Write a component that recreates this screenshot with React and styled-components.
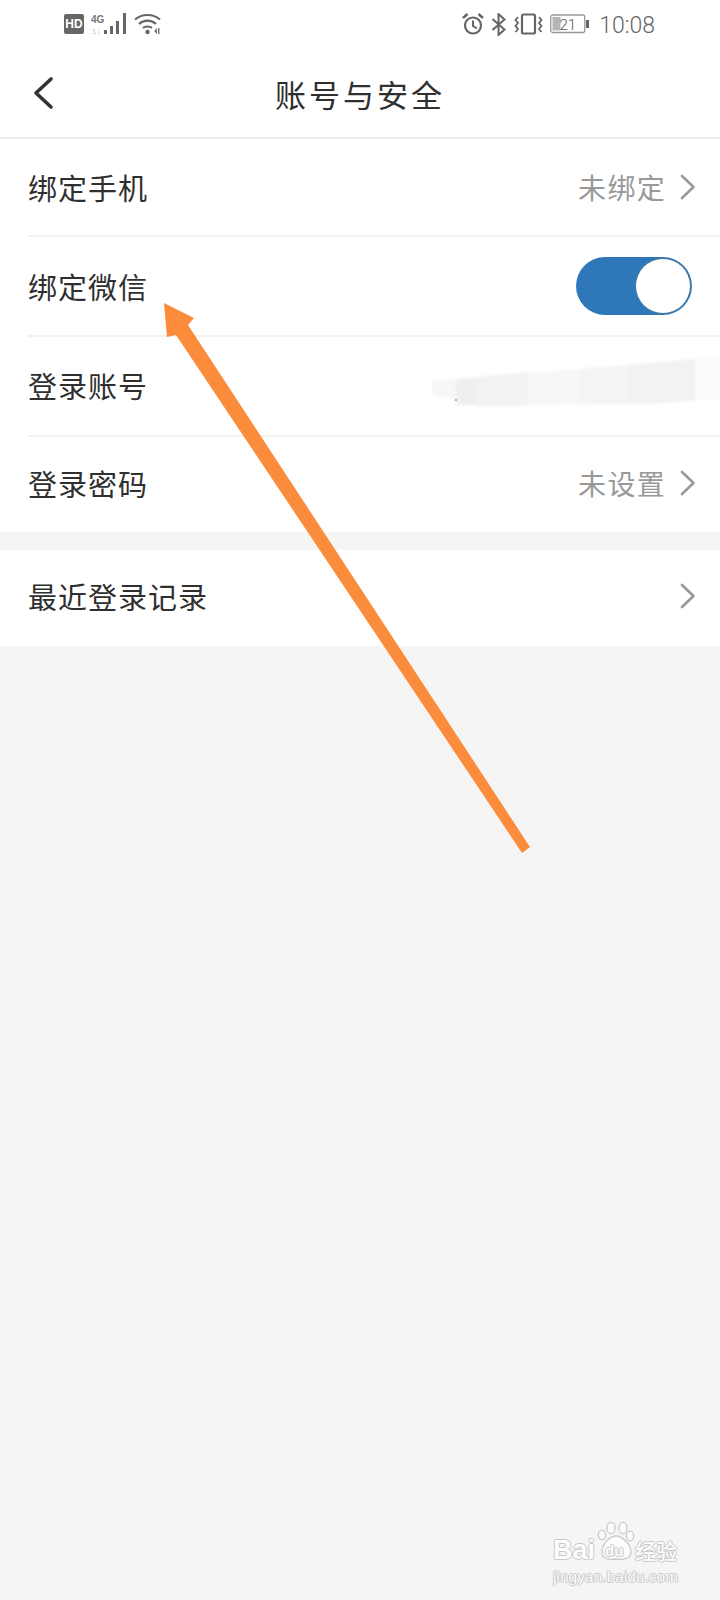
import styled, { createGlobalStyle } from "styled-components"

const Global = createGlobalStyle`
  html, body { margin: 0; padding: 0; background: #f5f5f5; }
  * { box-sizing: border-box; }
`
const cjk = `"Noto Sans CJK SC", "Liberation Sans", sans-serif`

const Screen = styled.div`
  position: relative;
  width: 720px; height: 1600px;
  overflow: hidden;
  background: #f5f5f5;
  font-family: ${cjk};
`
const Header = styled.header`
  background: #fff;
  border-bottom: 2px solid #ececec;
  height: 139px;
`
const StatusBar = styled.div`
  height: 50px;
  display: flex;
  align-items: center;
  justify-content: space-between;
  padding: 0 65px 2px 64px;
`
const StatusGroup = styled.div`
  display: flex;
  align-items: center;
  gap: ${p => p.$gap || 7}px;
`
const HdBadge = styled.span`
  width: 20px; height: 20px;
  border-radius: 2px;
  background: #666;
  color: #fff;
  font: bold 12px/20px "Liberation Sans", sans-serif;
  text-align: center;
`
const Time = styled.span`
  font: 300 23px/1 Roboto, "Liberation Sans", sans-serif;
  color: #666;
  margin: 2px 0 0 3px;
`
const Nav = styled.nav`
  position: relative;
  height: 87px;
  display: flex;
  align-items: center;
  justify-content: center;
`
const BackIcon = styled.svg`
  position: absolute;
  left: 32px; top: 26px;
`
const Title = styled.h1`
  margin: 0;
  font-size: 31px;
  font-weight: 400;
  letter-spacing: 3px;
  color: #2f2f2f;
`
const Section = styled.section`
  background: #fff;
  margin-bottom: ${p => p.$gap || 0}px;
`
const Row = styled.div`
  height: ${p => p.$height}px;
  margin-left: 28px;
  padding: 0 24px ${p => p.$lift || 0}px 0;
  display: flex;
  align-items: center;
  justify-content: space-between;
  border-bottom: ${p => (p.$last ? "none" : "2px solid #f1f1f1")};
`
const Label = styled.span`
  font-size: 29px;
  letter-spacing: 1px;
  color: #2f2f2f;
`
const Right = styled.div`
  display: flex;
  align-items: center;
  gap: 14px;
`
const Value = styled.span`
  font-size: 28px;
  letter-spacing: 1.3px;
  color: #999;
`
const Toggle = styled.div`
  position: relative;
  width: 116px; height: 58px;
  margin-right: 4px;
  border-radius: 29px;
  background: #2e77b8;
`
const Knob = styled.div`
  position: absolute;
  top: 1px; right: 1px;
  width: 56px; height: 56px;
  border-radius: 50%;
  background: #fff;
  border: 1.5px solid #3f7396;
`
const Smudge = styled.svg`
  margin-right: -24px;
`
const Overlay = styled.svg`
  position: absolute;
  left: 0; top: 0;
  pointer-events: none;
`
const Watermark = styled.div`
  position: absolute;
  left: 553px; top: 1521px;
  width: 135px;
  color: #fcfcfc;
  text-shadow: 1px 0 0 #c9c9c9, -1px 0 0 #c9c9c9, 0 1px 0 #c9c9c9, 0 -1px 0 #c9c9c9;
`
const MarkTop = styled.div`
  display: flex;
  align-items: flex-end;
  height: 41px;
`
const MarkBai = styled.span`
  font: bold 27px/24px "Liberation Sans", sans-serif;
`
const MarkDu = styled.span`
  position: relative;
  width: 37px; height: 41px;
  margin-left: 2px;
  flex: none;
`
const MarkDuText = styled.span`
  position: absolute;
  left: 8px; bottom: 1px;
  font: bold 15px/20px "Liberation Sans", sans-serif;
`
const MarkCn = styled.span`
  font: 500 21px/24px ${cjk};
  margin-left: 1px;
  white-space: nowrap;
`
const MarkUrl = styled.div`
  font: 15px/16px "Liberation Sans", sans-serif;
  letter-spacing: 0.25px;
  margin-top: 7px;
  white-space: nowrap;
`

const Chevron = () => (
  <svg width="16" height="26" viewBox="0 0 16 26">
    <path d="M2 2 L13.5 13 L2 24" fill="none" stroke="#999" strokeWidth="2.6" strokeLinecap="round" strokeLinejoin="round" />
  </svg>
)

const NetworkIcon = () => (
  <svg width="36" height="22" viewBox="0 0 36 22">
    <text x="0" y="10" fontFamily="Liberation Sans" fontSize="10" fontWeight="bold" fill="#777">4G</text>
    <text x="1" y="21" fontFamily="Liberation Sans" fontSize="8" fill="#c4c4c4">1↓</text>
    <rect x="13" y="17" width="3" height="4" fill="#666" />
    <rect x="19" y="13" width="3" height="8" fill="#666" />
    <rect x="25" y="8" width="3" height="13" fill="#666" />
    <rect x="32" y="0" width="3" height="21" fill="#666" />
  </svg>
)

const WifiIcon = () => (
  <svg width="27" height="22" viewBox="0 0 27 22">
    <g fill="none" stroke="#666" strokeWidth="2.2">
      <path d="M1 6.5 C8 0.5 19 0.5 26 6.5" />
      <path d="M5 11 C10 6.5 17 6.5 22 11" />
      <path d="M9 15 C11.5 13 15.5 13 18 15" />
    </g>
    <circle cx="13.5" cy="19" r="2.2" fill="#666" />
    <path d="M20 18 l3-3 v6 z M24 15 h1.5 v6 h-1.5 z" fill="#777" />
  </svg>
)

const AlarmIcon = () => (
  <svg width="22" height="22" viewBox="0 0 22 22">
    <circle cx="11" cy="12.5" r="8" fill="none" stroke="#666" strokeWidth="2.2" />
    <path d="M11 7.5 V13 L15 15.5" fill="none" stroke="#666" strokeWidth="2" />
    <path d="M1 5 L5.5 1 M21 5 L16.5 1" stroke="#666" strokeWidth="2.4" />
  </svg>
)

const BluetoothIcon = () => (
  <svg width="16" height="23" viewBox="0 0 16 23">
    <path d="M1.5 6 L13.5 16.5 L7.5 22 V1 L13.5 6.5 L1.5 17" fill="none" stroke="#666" strokeWidth="2" />
  </svg>
)

const VibrateIcon = () => (
  <svg width="29" height="22" viewBox="0 0 29 22">
    <rect x="8" y="1.5" width="13" height="19" rx="1.5" fill="none" stroke="#666" strokeWidth="2.2" />
    <path d="M4 4 L1.5 7 L4 10 L1.5 13 L4 16 L1.5 19 M25 4 L27.5 7 L25 10 L27.5 13 L25 16 L27.5 19" fill="none" stroke="#666" strokeWidth="1.8" />
  </svg>
)

const BatteryIcon = () => (
  <svg width="39" height="20" viewBox="0 0 39 20">
    <rect x="0.75" y="1" width="34" height="17.5" rx="2" fill="#fff" stroke="#999" strokeWidth="1.3" />
    <rect x="2.5" y="3" width="8" height="13.5" fill="#b5b5b5" />
    <text x="9.5" y="15.5" fontFamily="Roboto" fontSize="15" fontWeight="300" fill="#555">21</text>
    <rect x="36" y="6" width="3" height="8" fill="#666" />
  </svg>
)

const LoginSmudge = () => (
  <Smudge width="292" height="76" viewBox="0 0 292 76">
    <defs>
      <filter id="soft"><feGaussianBlur stdDeviation="1.5" /></filter>
    </defs>
    <g filter="url(#soft)">
      <polygon points="4,34 267,12 267,54 60,60 4,48" fill="#f7f7f7" />
      <polygon points="267,12 292,10 292,52 267,54" fill="#fbfbfb" />
      <polygon points="28,32 50,30 50,58 28,58" fill="#efefef" />
      <polygon points="50,30 100,25 100,58 50,60" fill="#f2f2f2" />
      <polygon points="150,22 240,16 240,56 150,58" fill="#f4f4f4" />
      <polygon points="200,18 267,12 267,54 200,56" fill="#f2f2f2" />
    </g>
    <circle cx="28" cy="53" r="1" fill="#999" />
  </Smudge>
)

const Arrow = () => (
  <Overlay width="720" height="1600" viewBox="0 0 720 1600">
    <polygon
      points="164,303 194,318 188,325 530,847 522,853 176,335 167,337"
      fill="#fb8c3c"
    />
  </Overlay>
)

const BaiduMark = () => (
  <Watermark>
    <MarkTop>
      <MarkBai>Bai</MarkBai>
      <MarkDu>
        <svg width="44" height="41" viewBox="0 0 44 41">
          <g fill="#fcfcfc" stroke="#c9c9c9" strokeWidth="1.3">
            <ellipse cx="5" cy="14" rx="3.6" ry="4.6" />
            <ellipse cx="14" cy="7" rx="4" ry="5.6" />
            <ellipse cx="26" cy="7" rx="4" ry="5.6" />
            <ellipse cx="33" cy="15" rx="3.6" ry="4.8" />
            <path d="M19 15 C12 15 5 24 5 31 C5 38 12 39 19 38 C27 39 34 38 34 31 C34 24 26 15 19 15 Z" />
          </g>
        </svg>
        <MarkDuText>du</MarkDuText>
      </MarkDu>
      <MarkCn>经验</MarkCn>
    </MarkTop>
    <MarkUrl>jingyan.baidu.com</MarkUrl>
  </Watermark>
)

export default function App() {
  return (
    <Screen>
      <Global />
      <Header>
        <StatusBar>
          <StatusGroup>
            <HdBadge>HD</HdBadge>
            <NetworkIcon />
            <WifiIcon />
          </StatusGroup>
          <StatusGroup $gap={7}>
            <AlarmIcon />
            <BluetoothIcon />
            <VibrateIcon />
            <BatteryIcon />
            <Time>10:08</Time>
          </StatusGroup>
        </StatusBar>
        <Nav>
          <BackIcon width="22" height="34" viewBox="0 0 22 34">
            <path d="M19 3 L4 17 L19 31" fill="none" stroke="#333" strokeWidth="3.6" strokeLinecap="round" strokeLinejoin="round" />
          </BackIcon>
          <Title>账号与安全</Title>
        </Nav>
      </Header>

      <Section $gap={18}>
        <Row $height={98}>
          <Label>绑定手机</Label>
          <Right>
            <Value>未绑定</Value>
            <Chevron />
          </Right>
        </Row>
        <Row $height={100}>
          <Label>绑定微信</Label>
          <Toggle><Knob /></Toggle>
        </Row>
        <Row $height={100} $lift={2}>
          <Label>登录账号</Label>
          <LoginSmudge />
        </Row>
        <Row $height={95} $last $lift={4}>
          <Label>登录密码</Label>
          <Right>
            <Value>未设置</Value>
            <Chevron />
          </Right>
        </Row>
      </Section>

      <Section>
        <Row $height={96} $last $lift={4}>
          <Label>最近登录记录</Label>
          <Chevron />
        </Row>
      </Section>

      <Arrow />
      <BaiduMark />
    </Screen>
  )
}
